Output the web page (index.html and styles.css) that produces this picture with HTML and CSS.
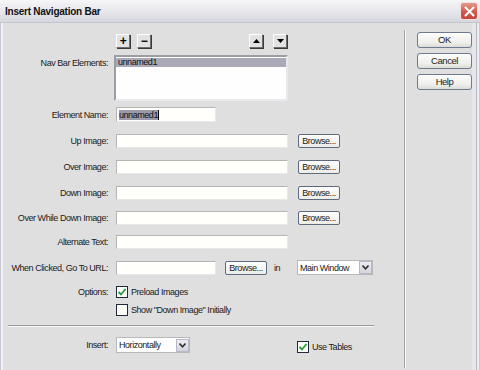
FILE: index.html
```html
<!DOCTYPE html>
<html>
<head>
    <title>Insert Navigation Bar</title>
    <link rel="stylesheet" href="styles.css">
</head>
<body>
    <div class="dialog">
        <div class="titlebar">
            <span class="title">Insert Navigation Bar</span>
            <span class="close">
                <svg width="11" height="11" viewBox="0 0 11 11"><path d="M1.5 1.5 L9.5 9.5 M9.5 1.5 L1.5 9.5" stroke="#fff" stroke-width="2" stroke-linecap="round"/></svg>
            </span>
        </div>
        <div class="frame">
            <div class="main">
                <div class="row tools-row">
                    <span class="label"></span>
                    <div class="tools">
                        <span class="group">
                            <button class="tool">+</button>
                            <button class="tool">&minus;</button>
                        </span>
                        <span class="group">
                            <button class="tool"><svg width="7" height="4" viewBox="0 0 7 4"><path d="M3.5 0 L7 4 L0 4 Z" fill="#000"/></svg></button>
                            <button class="tool"><svg width="7" height="4" viewBox="0 0 7 4"><path d="M0 0 L7 0 L3.5 4 Z" fill="#000"/></svg></button>
                        </span>
                    </div>
                </div>
                <div class="row list-row">
                    <span class="label">Nav Bar Elements:</span>
                    <div class="listbox">
                        <div class="item selected">unnamed1</div>
                    </div>
                </div>
                <div class="row name-row">
                    <span class="label">Element Name:</span>
                    <div class="input short"><span class="sel">unnamed1</span><span class="caret"></span></div>
                </div>
                <div class="row img-row first">
                    <span class="label">Up Image:</span>
                    <div class="input long"></div>
                    <button class="browse">Browse...</button>
                </div>
                <div class="row img-row">
                    <span class="label">Over Image:</span>
                    <div class="input long"></div>
                    <button class="browse">Browse...</button>
                </div>
                <div class="row img-row">
                    <span class="label">Down Image:</span>
                    <div class="input long"></div>
                    <button class="browse">Browse...</button>
                </div>
                <div class="row img-row tight">
                    <span class="label">Over While Down Image:</span>
                    <div class="input long"></div>
                    <button class="browse">Browse...</button>
                </div>
                <div class="row alt-row">
                    <span class="label">Alternate Text:</span>
                    <div class="input long"></div>
                </div>
                <div class="row url-row">
                    <span class="label">When Clicked, Go To URL:</span>
                    <div class="input short"></div>
                    <button class="browse url-browse">Browse...</button>
                    <span class="in">in</span>
                    <div class="select window-select">
                        <span class="value">Main Window</span>
                        <span class="arrow"><svg width="7" height="5" viewBox="0 0 7 5"><path d="M0.5 0.5 L3.5 3.8 L6.5 0.5" stroke="#333" stroke-width="1.6" fill="none"/></svg></span>
                    </div>
                </div>
                <div class="row check-row first-check">
                    <span class="label">Options:</span>
                    <span class="checkbox checked"><svg width="10" height="10" viewBox="0 0 10 10"><path d="M1.5 5 L4 7.5 L8.5 2" stroke="#2a9a3a" stroke-width="1.8" fill="none"/></svg></span>
                    <span class="check-text">Preload Images</span>
                </div>
                <div class="row check-row second-check">
                    <span class="label"></span>
                    <span class="checkbox"></span>
                    <span class="check-text">Show "Down Image" Initially</span>
                </div>
                <div class="hr"></div>
                <div class="row insert-row">
                    <span class="label">Insert:</span>
                    <div class="select insert-select">
                        <span class="value">Horizontally</span>
                        <span class="arrow"><svg width="7" height="5" viewBox="0 0 7 5"><path d="M0.5 0.5 L3.5 3.8 L6.5 0.5" stroke="#333" stroke-width="1.6" fill="none"/></svg></span>
                    </div>
                    <span class="checkbox checked tables-check"><svg width="10" height="10" viewBox="0 0 10 10"><path d="M1.5 5 L4 7.5 L8.5 2" stroke="#2a9a3a" stroke-width="1.8" fill="none"/></svg></span>
                    <span class="check-text">Use Tables</span>
                </div>
            </div>
            <div class="vsep"></div>
            <div class="side">
                <button class="dlg-btn">OK</button>
                <button class="dlg-btn">Cancel</button>
                <button class="dlg-btn">Help</button>
            </div>
            <div class="right-edge"></div>
        </div>
    </div>
</body>
</html>
```

FILE: styles.css
```css
body {
    margin: 0;
    font-family: "Liberation Sans", Arial, sans-serif;
    font-size: 9px;
    letter-spacing: -0.45px;
    color: #1a1a1a;
    background: #dfdfdf;
}
.dialog {
    width: 480px;
    height: 370px;
    background: #dfdfdf;
    display: flex;
    flex-direction: column;
    overflow: hidden;
}
.titlebar {
    height: 22px;
    flex: none;
    display: flex;
    align-items: center;
    justify-content: space-between;
    padding: 0 2px 0 5px;
    background: linear-gradient(#f6f6f8, #e4e4ea 60%, #d6d6de);
    border-bottom: 1px solid #c4c4cc;
}
.title {
    font-size: 10px;
    font-weight: bold;
    letter-spacing: -0.25px;
    color: #111;
    padding-top: 1px;
}
.close {
    width: 16px;
    height: 16px;
    border: 1px solid #f2e0e0;
    border-radius: 3px;
    background: linear-gradient(#e79a90, #cf5a4e 55%, #c2463c);
    display: flex;
    align-items: center;
    justify-content: center;
}
.frame {
    flex: 1;
    display: flex;
    padding-left: 4px;
    background: linear-gradient(to right, #c6c6ce 0 1px, #f2f2f6 1px 3px, #dfdfdf 3px);
}
.main {
    width: 400px;
    padding-top: 11px;
}
.vsep {
    width: 1px;
    margin: 7px 0 2px;
    background: #a2a2a2;
    border-right: 1px solid #f8f8f8;
}
.side {
    width: 66px;
    padding: 9px 0 0 11px;
    box-sizing: border-box;
    display: flex;
    flex-direction: column;
    gap: 5px;
}
.right-edge {
    width: 8px;
    background: linear-gradient(to right, #e6e6ec 0 4px, #b8b8c0 4px 5px, #ececf0 5px 7px, #c8c8d0 7px);
}
.row {
    display: flex;
    align-items: center;
}
.label {
    width: 104px;
    margin-right: 8px;
    text-align: right;
    flex: none;
}
button {
    font-family: inherit;
    letter-spacing: inherit;
    color: inherit;
    margin: 0;
    padding: 0;
}
.tools-row {
    height: 14px;
}
.tools {
    width: 171px;
    display: flex;
    justify-content: space-between;
}
.group {
    display: flex;
    gap: 7px;
}
.group + .group {
    gap: 10px;
}
.tool {
    width: 14px;
    height: 14px;
    font-size: 12px;
    font-weight: bold;
    line-height: 11px;
    background: #e2e2e2;
    border: 1px solid;
    border-color: #ffffff #6e6e6e #6e6e6e #ffffff;
    box-shadow: 1px 1px 0 #3a3a3a;
    display: flex;
    align-items: center;
    justify-content: center;
    color: #000;
}
.list-row {
    margin-top: 7px;
    align-items: flex-start;
}
.list-row .label {
    padding-top: 3px;
}
.listbox {
    width: 174px;
    height: 46px;
    margin-left: -2px;
    box-sizing: border-box;
    background: #fefefe;
    border: 2px solid;
    border-color: #9c9ca4 #e8e8ec #e8e8ec #9c9ca4;
    padding-top: 1px;
}
.item {
    height: 9px;
    line-height: 9px;
    padding-left: 2px;
}
.item.selected {
    background: #a9a9b7;
    color: #111;
}
.input {
    height: 14px;
    box-sizing: border-box;
    background: #fffffc;
    border: 1px solid;
    border-color: #b4b4b4 #e8e8e8 #e8e8e8 #b4b4b4;
    display: flex;
    align-items: center;
    padding-left: 2px;
    flex: none;
}
.input.short {
    width: 100px;
}
.input.long {
    width: 172px;
}
.name-row {
    margin-top: 6px;
}
.name-row .input {
    height: 15px;
}
.sel {
    background: #9a9aaa;
    color: #111;
    line-height: 10px;
}
.caret {
    width: 1px;
    height: 10px;
    background: #000;
}
.img-row {
    margin-top: 12px;
}
.img-row.tight {
    margin-top: 11px;
}
.browse {
    width: 42px;
    height: 14px;
    margin-left: 10px;
    box-sizing: border-box;
    border: 1px solid #5d6a80;
    border-radius: 2px;
    background: linear-gradient(#fefefe, #ecece8);
    line-height: 12px;
    font-size: 9px;
}
.alt-row {
    margin-top: 10px;
}
.url-row {
    margin-top: 11px;
    height: 15px;
}
.url-browse {
    margin-left: 9px;
}
.in {
    width: 30px;
    padding-left: 7px;
    box-sizing: border-box;
    flex: none;
}
.select {
    height: 15px;
    box-sizing: border-box;
    background: #fefefe;
    border: 1px solid #b8b8b8;
    display: flex;
    align-items: center;
    justify-content: space-between;
    padding-left: 2px;
    flex: none;
}
.window-select {
    width: 76px;
}
.insert-select {
    width: 74px;
    height: 16px;
}
.arrow {
    width: 13px;
    height: 13px;
    margin-right: 0;
    box-sizing: border-box;
    background: linear-gradient(#ececf2, #d4d4de);
    border: 1px solid #b8b8c8;
    display: flex;
    align-items: center;
    justify-content: center;
}
.check-row {
    height: 12px;
}
.first-check {
    margin-top: 11px;
}
.second-check {
    margin-top: 6px;
}
.checkbox {
    width: 12px;
    height: 12px;
    box-sizing: border-box;
    border: 1px solid #1e2a3a;
    background: #fbfbf8;
    display: flex;
    align-items: center;
    justify-content: center;
    flex: none;
}
.check-text {
    margin-left: 3px;
}
.hr {
    margin: 9px 0 0 4px;
    width: 366px;
    height: 1px;
    background: #9a9a9a;
    border-bottom: 1px solid #f8f8f8;
}
.insert-row {
    margin-top: 10px;
    height: 16px;
}
.tables-check {
    margin-left: 107px;
    margin-top: 4px;
}
.insert-row .check-text {
    margin-top: 4px;
}
.dlg-btn {
    width: 55px;
    height: 16px;
    box-sizing: border-box;
    border: 1px solid #6d7a90;
    border-radius: 3px;
    background: linear-gradient(#fdfdfd, #eeeeea 70%, #dcdcd6);
    font-size: 9.5px;
    line-height: 14px;
}
```
